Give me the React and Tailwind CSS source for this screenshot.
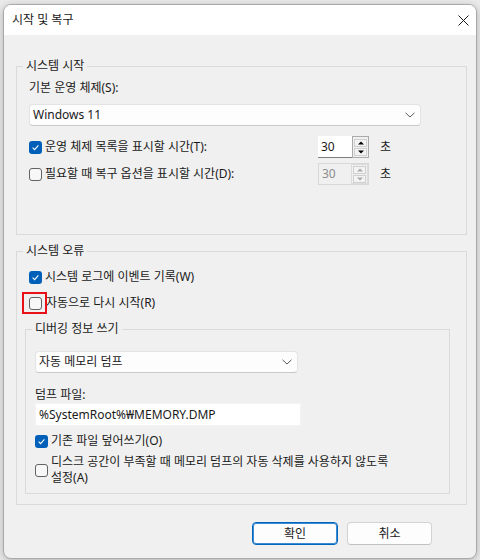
import React from 'react';

const CheckBox = ({ checked }) =>
    checked ? (
        <span className="flex h-[13px] w-[13px] shrink-0 items-center justify-center rounded-[3px] bg-[#005fb8]">
            <svg width="9" height="9" viewBox="0 0 9 9">
                <path d="M1.6 4.7 L3.6 6.6 L7.4 2.4" fill="none" stroke="#ffffff" strokeWidth="1.1" />
            </svg>
        </span>
    ) : (
        <span className="block h-[13px] w-[13px] shrink-0 rounded-[3px] border border-[#626262] bg-[#f7f7f7]" />
    );

const Chevron = () => (
    <svg width="10" height="6" viewBox="0 0 10 6">
        <path d="M0.5 0.8 L5 5 L9.5 0.8" fill="none" stroke="#5c5c5c" strokeWidth="1" />
    </svg>
);

const Combo = ({ value, width }) => (
    <div className={`flex h-[22px] items-center justify-between rounded-[4px] border border-[#e3e3e3] border-b-[#c9c9c9] bg-[#fdfdfd] pl-[3px] pr-[5px] ${width}`}>
        <span>{value}</span>
        <Chevron />
    </div>
);

const Arrow = ({ up, disabled }) => (
    <div className="flex h-[8px] items-center justify-center border border-[#d0d0d0] bg-[#f3f3f3]">
        <svg width="6" height="4" viewBox="0 0 6 4">
            <path d={up ? 'M0 3.5 L3 0.5 L6 3.5 Z' : 'M0 0.5 L3 3.5 L6 0.5 Z'} fill={disabled ? '#a8a8a8' : '#000000'} />
        </svg>
    </div>
);

const Spinner = ({ disabled }) => (
    <div className={`flex h-[22px] w-[51px] ${disabled ? 'border border-[#d8d8d8]' : ''}`}>
        <div className={`flex flex-1 items-center pl-[3px] ${disabled ? 'bg-[#f0f0f0] text-[#8c8c8c]' : 'border-b border-[#7d7d7d] bg-white'}`}>30</div>
        <div className={`flex w-[17px] flex-col justify-center gap-[1px] border px-[1px] ${disabled ? 'border-[#dcdcdc]' : 'border-[#ababab]'}`}>
            <Arrow up disabled={disabled} />
            <Arrow disabled={disabled} />
        </div>
    </div>
);

const TimeRow = ({ checked, label, disabled }) => (
    <div className="flex h-[22px] items-center">
        <div className="flex w-[289px] items-center gap-[3px]">
            <CheckBox checked={checked} />
            <span>{label}</span>
        </div>
        <Spinner disabled={disabled} />
        <span className="ml-[11px]">초</span>
    </div>
);

const App = () => {
    return (
        <div className="h-[560px] w-[480px] overflow-hidden bg-[#ececec] pl-[3px] pt-[4px] font-['Noto_Sans','Noto_Sans_CJK_KR',sans-serif] text-[12px] leading-[16px] text-[#1a1a1a]">
            <div className="h-[555px] w-[474px] overflow-hidden rounded-[8px] border border-[#a9a9a9] bg-[#f0f0f0] shadow-[0_2px_10px_rgba(0,0,0,0.25)]">
                {/* 타이틀 바 */}
                <div className="flex h-[30px] items-center justify-between bg-white pl-[8px] pr-[7px]">
                    <span>시작 및 복구</span>
                    <svg width="11" height="11" viewBox="0 0 11 11">
                        <path d="M0.5 0.5 L10.5 10.5 M10.5 0.5 L0.5 10.5" stroke="#1a1a1a" strokeWidth="1" />
                    </svg>
                </div>

                <div className="pl-[12px] pt-[23px]">
                    {/* 시스템 시작 */}
                    <fieldset className="w-[451px] border border-[#dadada] pb-[49px] pl-[12px]">
                        <legend className="ml-[-6px] h-[16px] px-[3px]">시스템 시작</legend>
                        <div className="mt-[6px] h-[16px]">기본 운영 체제(S):</div>
                        <div className="mt-[8px]">
                            <Combo value="Windows 11" width="w-[392px]" />
                        </div>
                        <div className="mt-[10px]">
                            <TimeRow checked label="운영 체제 목록을 표시할 시간(T):" />
                        </div>
                        <div className="mt-[5px]">
                            <TimeRow label="필요할 때 복구 옵션을 표시할 시간(D):" disabled />
                        </div>
                    </fieldset>

                    {/* 시스템 오류 */}
                    <fieldset className="mt-[8px] w-[451px] border border-[#dadada] pb-[10px] pl-[12px]">
                        <legend className="ml-[-6px] h-[16px] px-[3px]">시스템 오류</legend>
                        <div className="mt-[8px] flex h-[20px] items-center gap-[3px]">
                            <CheckBox checked />
                            <span>시스템 로그에 이벤트 기록(W)</span>
                        </div>
                        <div className="mt-[6px] flex h-[20px] items-center gap-[4px]">
                            <span className="relative flex">
                                <CheckBox />
                                <span className="absolute left-[-7px] top-[-5px] h-[22px] w-[25px] border-2 border-[#e8111a]" />
                            </span>
                            <span>자동으로 다시 시작(R)</span>
                        </div>

                        {/* 디버깅 정보 쓰기 */}
                        <fieldset className="ml-[-4px] mt-[8px] w-[425px] border border-[#dadada] pb-[8px] pl-[9px]">
                            <legend className="ml-[-3px] h-[16px] px-[3px]">디버깅 정보 쓰기</legend>
                            <div className="mt-[14px]">
                                <Combo value="자동 메모리 덤프" width="w-[263px]" />
                            </div>
                            <div className="mt-[14px] h-[16px]">덤프 파일:</div>
                            <div className="flex h-[23px] w-[266px] items-center border border-[#f4f4f4] bg-white pl-[3px]">
                                %SystemRoot%₩MEMORY.DMP
                            </div>
                            <div className="mt-[5px] flex h-[20px] items-center gap-[3px]">
                                <CheckBox checked />
                                <span>기존 파일 덮어쓰기(O)</span>
                            </div>
                            <div className="mt-[4px] flex h-[30px] items-center gap-[3px]">
                                <CheckBox />
                                <span className="leading-[16px]">
                                    디스크 공간이 부족할 때 메모리 덤프의 자동 삭제를 사용하지 않도록
                                    <br />
                                    설정(A)
                                </span>
                            </div>
                        </fieldset>
                    </fieldset>

                    {/* 버튼 */}
                    <div className="mt-[17px] flex justify-end gap-[9px] pr-[44px]">
                        <button className="h-[23px] w-[86px] rounded-[4px] border border-[#0067c0] bg-[#fdfdfd] shadow-[inset_0_0_0_1px_#3d8ad0]">확인</button>
                        <button className="h-[23px] w-[85px] rounded-[4px] border border-[#d3d3d3] border-b-[#c2c2c2] bg-[#fdfdfd]">취소</button>
                    </div>
                </div>
            </div>
        </div>
    );
};

export default App;
